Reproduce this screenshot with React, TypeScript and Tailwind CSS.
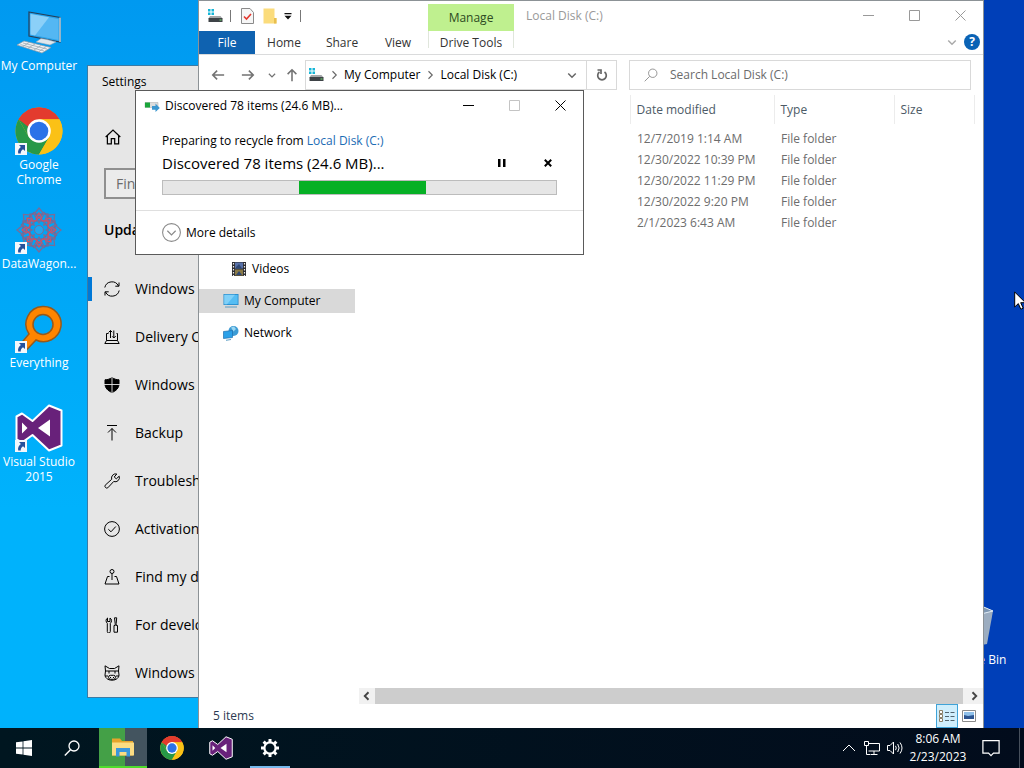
import type { ReactNode } from "react";

const font = "font-['Open_Sans','Noto_Sans',sans-serif]";

function ChromeLogo({ className }: { className: string }) {
  return (
    <svg viewBox="0 0 48 48" className={className} aria-hidden="true">
      <circle cx="24" cy="24" r="23.500" fill="#fbc116" />
      <path d="M3.600 12.300A23.500 23.500 0 0 0 24 47.500L34.200 29.900 24 24 13.800 29.900Z" fill="#279847" />
      <path d="M3.600 12.300A23.500 23.500 0 0 1 44.400 12.300H24L13 18Z" fill="#e33b2e" />
      <path d="M3.600 12.300 13.800 29.900 20 20Z" fill="#279847" />
      <path d="M3.600 12.300A23.500 23.500 0 0 1 44.400 12.300H24L13.500 20Z" fill="#e33b2e" />
      <path d="M44.400 12.300H24L34.200 29.900 24 47.500A23.500 23.500 0 0 0 44.400 12.300Z" fill="#fbc116" />
      <circle cx="24" cy="24" r="11.800" fill="#fff" />
      <circle cx="24" cy="24" r="9.300" fill="#2b72e8" />
    </svg>
  );
}

function VisualStudioLogo({ className }: { className: string }) {
  return (
    <svg viewBox="0 0 48 48" className={className} aria-hidden="true">
      <path
        d="M34 1.500 46.500 6.500V41.500L34 46.500 17.500 31 7 38.500 1.500 35.500V12.500L7 9.500 17.500 17Z"
        fill="#68217a"
        stroke="#fff"
        strokeWidth="2"
        strokeLinejoin="round"
      />
      <path d="M35 15.500V32.500L23 24Z M7 18.500V29.500L12.500 24Z" fill="#fff" />
    </svg>
  );
}

function ComputerIcon() {
  return (
    <svg viewBox="0 0 48 48" className="size-12" aria-hidden="true">
      <path d="M14 4 45 9.500V34L14 28Z" fill="#2aa3ea" stroke="#253f5a" strokeWidth="1.200" />
      <path d="M15.500 6 43.500 11V32L15.500 26.500Z" fill="#54b7f3" />
      <path d="M15.500 6 34 9.300 20 27.500 15.500 26.500Z" fill="#8bd0f8" />
      <path d="M45 9.500V34" stroke="#e8edf0" strokeWidth="1.200" />
      <path d="M26 30.500 32 31.500 41 34 35 37 21 34Z" fill="#dfe7ec" stroke="#8ea6b8" strokeWidth=".6" />
      <path d="M9 33 36 39.500 27 45 2 37Z" fill="#eef1f3" stroke="#8c9aa6" strokeWidth=".7" />
      <path d="M8 35 32 41M5.500 36.600 29 43M14 34.500 8 38.500M20 36 13 40.200M26 37.500 19 42M31 38.600 24 43.600" stroke="#9aa8b3" strokeWidth=".8" />
    </svg>
  );
}

function DataWagonIcon() {
  const angles = [0, 45, 90, 135];
  const petals = [0, 45, 90, 135, 180, 225, 270, 315];
  return (
    <svg viewBox="0 0 48 48" className="size-12" fill="none" aria-hidden="true">
      {angles.map((a) => (
        <rect key={a} x="8" y="15" width="32" height="18" stroke="#6f6a9a" strokeWidth="1.300" transform={`rotate(${a} 24 24)`} />
      ))}
      {petals.map((a) => (
        <g key={a} transform={`rotate(${a} 24 24)`}>
          <path d="M24 17 19 8 24 2 29 8Z" stroke="#7b6c96" strokeWidth="1.300" />
          <path d="M21 12 24 7 27 12M20 15 24 11 28 15" stroke="#cf5266" strokeWidth="1.200" />
        </g>
      ))}
      <circle cx="24" cy="24" r="4.500" fill="#22a6ee" stroke="#7b6c96" />
    </svg>
  );
}

function EverythingIcon() {
  return (
    <svg viewBox="0 0 48 48" className="size-12" aria-hidden="true">
      <path
        fillRule="evenodd"
        d="M27.500 1.500A17.600 17.600 0 1 1 21 35L12 44.500 6 38.500 14 29A17.600 17.600 0 0 1 27.500 1.500ZM28 9.500A10 10 0 1 0 28 29.500 10 10 0 0 0 28 9.500Z"
        fill="#ff8500"
        stroke="#95591c"
        strokeWidth="1.500"
      />
    </svg>
  );
}

function RecycleBinIcon() {
  return (
    <svg viewBox="0 0 48 48" className="size-12" aria-hidden="true">
      <path d="M7 7 28 3 42 9 36 42 20 45 11 40Z" fill="#9cadc0" />
      <path d="M7 7 28 3 42 9 22 14Z" fill="#7f98b3" stroke="#e3edf6" />
      <path d="M22 14 20 45" stroke="#d7e2ec" />
    </svg>
  );
}

function ShortcutArrow() {
  return (
    <svg viewBox="0 0 12 12" className="absolute bottom-0 left-0 size-3" aria-hidden="true">
      <path d="M0 0H12V12H0Z" fill="#f4f7fb" />
      <path d="M4 2H10V8L8 6.200C6.200 7.400 5.600 8.600 5.800 10.500H3.200C2.600 7.800 3.800 5.600 5.900 4Z" fill="#26519c" />
    </svg>
  );
}

function DesktopIcon({ label, icon, shortcut }: { label: string; icon: ReactNode; shortcut?: boolean }) {
  return (
    <a href="#open" className="flex h-[99px] w-[78px] flex-col items-center gap-0.5 text-center text-xs leading-[15px] text-white">
      <span className="relative">
        {icon}
        {shortcut && <ShortcutArrow />}
      </span>
      <span>{label}</span>
    </a>
  );
}

function LineIcon({ children, className = "size-4" }: { children: ReactNode; className?: string }) {
  return (
    <svg viewBox="0 0 16 16" className={`${className} shrink-0`} fill="none" stroke="currentColor" aria-hidden="true">
      {children}
    </svg>
  );
}

const settingsItems: { label: string; icon: ReactNode }[] = [
  {
    label: "Windows Update",
    icon: <path d="M.8 6.500A7.300 7.300 0 0 1 14.500 5M15.200 9.500A7.300 7.300 0 0 1 1.500 11M15 1.500V5.200H11.300M1 14.500V10.800H4.700" />,
  },
  {
    label: "Delivery Optimization",
    icon: <path d="M4.500 4.500H2.500V11.500H13.500V4.500H12.500M2.500 11.500 .8 14.500H15.200L13.500 11.500M6.500 9V1.500M4.500 3.500 6.500 1.500 8.200 3.200M9.800 1.500V9M8.200 7.300 9.800 9 11.800 7" />,
  },
  {
    label: "Windows Security",
    icon: (
      <>
        <path d="M8 .5C10 2 12.500 2.800 15 2.800V7C15 11 12 14 8 15.500 4 14 1 11 1 7V2.800C3.500 2.800 6 2 8 .5Z" fill="currentColor" />
        <path d="M8 0V16M0 7.500H16" stroke="#e6e6e6" strokeWidth=".9" />
      </>
    ),
  },
  { label: "Backup", icon: <path d="M3 .5H13M8 15.500V3.500M4 7.500 8 3.500 12 7.500" /> },
  {
    label: "Troubleshoot",
    icon: <path d="M15.200 3.200 12.300 5.800 10.200 4 12.800 1A4.200 4.200 0 0 0 7.700 6.300L1.200 12.200A1.900 1.900 0 0 0 3.800 14.800L9.700 8.500A4.200 4.200 0 0 0 15.200 3.200Z" />,
  },
  {
    label: "Activation",
    icon: (
      <>
        <circle cx="8" cy="8" r="7.400" />
        <path d="M4.300 8.200 7 10.800 11.800 5.500" />
      </>
    ),
  },
  {
    label: "Find my device",
    icon: (
      <>
        <circle cx="8" cy="2.500" r="2" />
        <path d="M8 4.500V11M5.500 7.500H3.500L1 15H15L12.500 7.500H10.500" />
      </>
    ),
  },
  {
    label: "For developers",
    icon: <path d="M3.500 1V4.500H6V1C8 2 8 5 6.300 6.300V14.500A1.500 1.500 0 0 1 3.300 14.500V6.300C1.600 5 1.600 2 3.500 1ZM10.500 .8H12.700L12.200 6.500V8.500H13.500V15.200H10V8.500H11.200V6.500Z" />,
  },
  {
    label: "Windows Insider Program",
    icon: (
      <>
        <path d="M1.500 6 1 .8 5.500 3.500H10.500L15 .8 14.500 6 15 10C15 12.500 12.500 15.200 8 15.200S1 12.500 1 10ZM1.500 6H14.500M5 6V8.500M11 6V8.500M1 11H4" />
        <rect x="4.500" y="10.300" width="7" height="4" rx="2" />
        <path d="M6.500 12V13M9.500 12V13M12 11H15" />
      </>
    ),
  },
];

function SettingsWindow() {
  return (
    <section
      aria-label="Settings"
      className="absolute top-[65px] left-[87px] flex h-[633px] w-[600px] flex-col border border-[#3b7ba5] bg-[#e6e6e6] text-black"
    >
      <h2 className="px-3.5 pt-2 text-xs leading-4">Settings</h2>
      <div className="mt-7 flex h-10 items-center px-4">
        <LineIcon className="size-[18px]">
          <path d="M1.500 8 8 1.800 14.500 8M3 6.800V14.200H6.500V9.500H9.500V14.200H13V6.800" strokeWidth="1.100" />
        </LineIcon>
      </div>
      <input
        aria-label="Find a setting"
        placeholder="Find a setting"
        className="mx-4 mt-3 h-8 w-[240px] border-2 border-[#8f8f8f] bg-[#ebebeb] px-2.5 text-sm placeholder:text-[#6b6b6b]"
      />
      <h3 className="mt-[21px] px-4 text-sm leading-5 font-semibold">Update &amp; Security</h3>
      <nav className="mt-[25px] flex flex-col">
        {settingsItems.map((item, i) => (
          <a key={item.label} href="#settings" className="flex h-12 items-center">
            <span className={i === 0 ? "h-6 w-1 bg-[#0078d7]" : "h-6 w-1"} />
            <span className="ml-3 flex w-[31px]">
              <LineIcon>{item.icon}</LineIcon>
            </span>
            <span className="text-sm whitespace-nowrap">{item.label}</span>
          </a>
        ))}
      </nav>
    </section>
  );
}

function DriveIcon() {
  return (
    <svg viewBox="0 0 16 16" className="size-4 shrink-0" aria-hidden="true">
      <path d="M1 1H3.500V3.500H1ZM4.500 1H7V3.500H4.500ZM1 4.500H3.500V7H1ZM4.500 4.500H7V7H4.500Z" fill="#16b6d8" />
      <path d="M3 8H13.500L15.500 10.500H1.500Z" fill="#a5a8aa" />
      <path d="M1.500 10H15.500V14H1.500Z" fill="#3e4347" />
      <path d="M12.500 12H14.500" stroke="#6fe36f" />
    </svg>
  );
}

function Chevron({ dir, className }: { dir: "down" | "right" | "left" | "up"; className: string }) {
  const d = { down: "M3 6 8 11 13 6", right: "M6 3 11 8 6 13", left: "M10 3 5 8 10 13", up: "M2 11 8 5 14 11" }[dir];
  return (
    <svg viewBox="0 0 16 16" className={className} fill="none" stroke="currentColor" aria-hidden="true">
      <path d={d} />
    </svg>
  );
}

function WindowControls({ maxClass = "" }: { maxClass?: string }) {
  const shapes = [
    { label: "Minimize", d: "M0 5.500H11", cls: "" },
    { label: "Maximize", d: "M.5 .5H10.500V10.500H.5Z", cls: maxClass },
    { label: "Close", d: "M.5 .5 10.500 10.500M10.500 .5 .5 10.500", cls: "" },
  ];
  return (
    <div className="flex">
      {shapes.map((s) => (
        <button key={s.label} type="button" aria-label={s.label} className={`flex h-7 w-[46px] items-center justify-center ${s.cls}`}>
          <svg viewBox="0 0 11 11" className="size-[11px]" fill="none" stroke="currentColor" aria-hidden="true">
            <path d={s.d} />
          </svg>
        </button>
      ))}
    </div>
  );
}

const files = [
  ["12/7/2019 1:14 AM", "File folder"],
  ["12/30/2022 10:39 PM", "File folder"],
  ["12/30/2022 11:29 PM", "File folder"],
  ["12/30/2022 9:20 PM", "File folder"],
  ["2/1/2023 6:43 AM", "File folder"],
];

function ExplorerWindow() {
  return (
    <section
      aria-label="Local Disk (C:)"
      className="absolute top-0 right-10 bottom-0 left-[198px] flex flex-col border border-b-0 border-[#8c9296] bg-white text-xs text-[#333]"
    >
      <header className="flex h-[54px] shrink-0 border-b border-[#dadbdc]">
        <div className="flex w-[229px] flex-col">
          <div className="flex h-[30px] items-center pl-2">
            <DriveIcon />
            <span className="mx-[7px] h-3 w-px bg-[#777]" />
            <svg viewBox="0 0 16 16" className="ml-0.5 size-4" fill="none" aria-hidden="true">
              <path d="M1.500 .5H10L13.500 4.500V15.500H1.500Z" fill="#f6f6f6" stroke="#8a8a8a" />
              <path d="M4 8.500 6.500 11 11 6" stroke="#e2372d" strokeWidth="1.600" />
            </svg>
            <svg viewBox="0 0 16 16" className="ml-1.5 size-4" aria-hidden="true">
              <path d="M1.500 .5H12.500V10H14.500V15.500H1.500Z" fill="#fbdc7c" />
              <path d="M12 10H14.500V15.500H12Z" fill="#e8bf4f" />
            </svg>
            <svg viewBox="0 0 8 8" className="ml-1.5 size-2" aria-hidden="true">
              <path d="M.5 1H7.500V2.200H.5ZM.5 3.800H7.500L4 7.500Z" fill="#111" />
            </svg>
            <span className="ml-2 h-3 w-px bg-[#777]" />
          </div>
          <div className="flex h-[23px] items-stretch">
            <button type="button" className="w-14 bg-[#0f62b0] text-white">File</button>
            <button type="button" className="w-[58px]">Home</button>
            <button type="button" className="w-[58px]">Share</button>
            <button type="button" className="w-[54px]">View</button>
          </div>
        </div>
        <div className="mt-[3px] flex w-[86px] flex-col">
          <div className="flex h-[27px] items-center justify-center bg-[#bff08f] text-[#2d4a22]">Manage</div>
          <button type="button" className="h-[17px] border-x border-[#e0e6dc] pt-1">Drive Tools</button>
        </div>
        <div className="flex flex-1 flex-col">
          <div className="flex h-[30px] items-start justify-between pl-3 text-[#999]">
            <span className="leading-[30px]">Local Disk (C:)</span>
            <WindowControls />
          </div>
          <div className="flex items-center justify-end gap-1.5 pt-[3px] pr-[3px]">
            <Chevron dir="down" className="size-3 stroke-2 text-[#aaa]" />
            <button type="button" aria-label="Help" className="flex size-4 items-center justify-center rounded-full bg-[#0a63b5] text-xs leading-4 font-bold text-white">
              ?
            </button>
          </div>
        </div>
      </header>

      <div className="flex h-10 shrink-0 items-center px-3">
        <div className="flex w-[94px] items-center text-[#737373]">
          <LineIcon className="size-3.5">
            <path d="M15 8H2M7 3 2 8 7 13" strokeWidth="1.800" />
          </LineIcon>
          <LineIcon className="ml-4 size-3.5">
            <path d="M1 8H14M9 3 14 8 9 13" strokeWidth="1.800" />
          </LineIcon>
          <Chevron dir="down" className="ml-3 size-2.5 stroke-2" />
          <LineIcon className="ml-2 size-3.5">
            <path d="M8 15V2M3 7 8 2 13 7" strokeWidth="1.800" />
          </LineIcon>
        </div>
        <div className="flex h-[30px] w-[312px] items-stretch border border-[#d9d9d9]">
          <div className="flex flex-1 items-center pl-0.5 text-black">
            <DriveIcon />
            <Chevron dir="right" className="mx-1 size-3 stroke-[1.5] text-[#666]" />
            <span>My Computer</span>
            <Chevron dir="right" className="mx-1 size-3 stroke-[1.5] text-[#666]" />
            <span>Local Disk (C:)</span>
            <Chevron dir="down" className="mr-2 ml-auto size-3 stroke-2 text-[#666]" />
          </div>
          <button type="button" aria-label="Refresh" className="flex w-[30px] items-center justify-center border-l border-[#d9d9d9] text-[#666]">
            <svg viewBox="0 0 14 14" className="size-3.5" fill="none" stroke="currentColor" aria-hidden="true">
              <path d="M9.500 4A4.300 4.300 0 1 1 4.500 4M2.500 2H6V6" strokeWidth="1.700" />
            </svg>
          </button>
        </div>
        <label className="ml-3 flex h-[30px] flex-1 items-center gap-3 border border-[#d9d9d9] pl-3.5 text-[#888]">
          <LineIcon className="size-3.5">
            <circle cx="10" cy="6" r="4.800" />
            <path d="M6.500 9.500 .8 15.200" />
          </LineIcon>
          <input aria-label="Search Local Disk (C:)" placeholder="Search Local Disk (C:)" className="min-w-0 flex-1 text-xs placeholder:text-[#6b6b6b]" />
        </label>
      </div>

      <div className="flex min-h-0 flex-1">
        <nav className="flex w-[156px] shrink-0 flex-col gap-2 pt-[162px] text-black">
          <a href="#videos" className="flex h-6 items-center gap-[5px] pl-8">
            <svg viewBox="0 0 16 16" className="size-4" aria-hidden="true">
              <path d="M1 1H15V15H1Z" fill="#2c2c30" />
              <path d="M4 1.500H12V7.500H4Z" fill="#5871a8" />
              <path d="M4 8.500H12V14.500H4Z" fill="#8a7a46" />
              <path d="M5 6 8 3 11 7.500H5ZM5 14 8 10 11 14Z" fill="#2f4875" />
              <path d="M2.500 2V15M13.500 2V15" stroke="#eee" strokeWidth="1.200" strokeDasharray="1.500 1.500" />
            </svg>
            <span>Videos</span>
          </a>
          <a href="#computer" className="flex h-6 items-center gap-[5px] bg-[#d9d9d9] pl-6">
            <svg viewBox="0 0 16 16" className="size-4" aria-hidden="true">
              <path d="M.5 1H15.500V12H.5Z" fill="#2588c8" />
              <path d="M1.300 1.800H14.700V11.200H1.300Z" fill="#55bdf3" />
              <path d="M1.300 1.800H12L4 11.200H1.300Z" fill="#80d0f8" />
              <path d="M2 14H14" stroke="#5a9cc4" />
            </svg>
            <span>My Computer</span>
          </a>
          <a href="#network" className="flex h-6 items-center gap-[5px] pl-6">
            <svg viewBox="0 0 16 16" className="size-4" aria-hidden="true">
              <circle cx="10.500" cy="6" r="5" fill="#3d9bd4" />
              <path d="M8 2.500 11 1.500 13 4 10.500 6.500Z" fill="#9bd7f2" />
              <path d="M.5 6.500 9.500 5.500V12.500L.5 13.500Z" fill="#2aa0e8" stroke="#1f6fae" strokeWidth=".7" />
              <path d="M3 15.300 8 14.500" stroke="#5a9cc4" />
            </svg>
            <span>Network</span>
          </a>
        </nav>

        <div className="flex min-w-0 flex-1 flex-col pl-1">
          <div className="flex-1 overflow-hidden">
            <table className="w-[615px] table-fixed border-collapse text-left text-[#6d6d6d]">
              <colgroup>
                <col className="w-[271px]" />
                <col className="w-36" />
                <col className="w-[120px]" />
                <col className="w-20" />
              </colgroup>
              <thead>
                <tr className="h-[29px] text-[#4c5a66]">
                  <td className="border-r border-[#ececec]" />
                  <th className="border-r border-[#ececec] pl-1.5 font-normal">Date modified</th>
                  <th className="border-r border-[#ececec] pl-1.5 font-normal">Type</th>
                  <th className="border-r border-[#ececec] pl-1.5 font-normal">Size</th>
                </tr>
              </thead>
              <tbody>
                <tr className="h-1">
                  <td colSpan={4} />
                </tr>
                {files.map(([date, type]) => (
                  <tr key={date} className="h-[21px]">
                    <td />
                    <td className="pl-[7px] whitespace-nowrap">{date}</td>
                    <td className="pl-[7px]">{type}</td>
                    <td />
                  </tr>
                ))}
              </tbody>
            </table>
          </div>
          <div className="flex h-4 shrink-0 items-center bg-[#f1f1f1] text-[#444]">
            <button type="button" aria-label="Scroll left" className="flex w-4 justify-center">
              <Chevron dir="left" className="size-3 stroke-[2.5]" />
            </button>
            <div className="h-4 flex-1 bg-[#cdcdcd]" />
            <button type="button" aria-label="Scroll right" className="flex w-5 justify-center pl-0.5">
              <Chevron dir="right" className="size-3 stroke-[2.5]" />
            </button>
          </div>
        </div>
      </div>

      <footer className="flex h-6 shrink-0 items-center pr-1.5 pl-3.5 text-[#2c3a52]">
        <span className="flex-1">5 items</span>
        <button type="button" aria-label="Details view" className="flex h-6 w-[22px] items-center justify-center border border-[#3fa3d8] bg-[#cfeefc]">
          <svg viewBox="0 0 16 14" className="h-3.5 w-4" fill="none" aria-hidden="true">
            <path d="M.5 1.500H3.500V4.500H.5ZM.5 5.500H3.500V8.500H.5ZM.5 9.500H3.500V12.500H.5Z" fill="#fff" stroke="#8a7f66" />
            <path d="M6 3.500H10M11.500 3.500H15.500M6 7.500H10M11.500 7.500H15.500M6 11.500H10M11.500 11.500H15.500" stroke="#52646e" />
          </svg>
        </button>
        <button type="button" aria-label="Thumbnail view" className="ml-[3px] flex w-4 justify-center">
          <svg viewBox="0 0 14 12" className="h-3 w-3.5" aria-hidden="true">
            <path d="M.5 .5H13.500V11.500H.5Z" fill="#fff" stroke="#8b8b8b" />
            <path d="M2 2H12V9H2Z" fill="#8fc0ea" />
            <path d="M2 5 6 6 12 5V9H2Z" fill="#2c5490" />
          </svg>
        </button>
      </footer>
    </section>
  );
}

function ProgressDialog() {
  return (
    <section
      aria-label="Discovered 78 items"
      className="absolute top-[90px] left-[135px] flex w-[449px] flex-col border border-[#5a5a5a] bg-white text-xs text-black"
    >
      <header className="flex h-[29px] items-center pl-2">
        <svg viewBox="0 0 16 14" className="mr-[5px] h-3.5 w-4" aria-hidden="true">
          <path d="M1 3.500H14V8.500H1Z" fill="#dcdcdc" stroke="#aaa" strokeWidth=".5" />
          <path d="M1 3.500H6V8.500H1Z" fill="#1aa53a" />
          <path d="M8 7H11.500V4.500L15.800 9 11.500 13V10.700H8Z" fill="#3c97cf" />
        </svg>
        <span className="flex-1">Discovered 78 items (24.6 MB)...</span>
        <WindowControls maxClass="text-[#c4c4c4]" />
      </header>
      <div className="px-[26px] pt-[13px] pb-[15px]">
        <p className="leading-4">
          Preparing to recycle from <a href="#disk" className="text-[#1c6cb4]">Local Disk (C:)</a>
        </p>
        <div className="flex h-[27px] items-center">
          <h2 className="flex-1 text-[15px] leading-6">Discovered 78 items (24.6 MB)...</h2>
          <button type="button" aria-label="Pause" className="flex w-4 justify-center">
            <svg viewBox="0 0 8 8" className="size-2" aria-hidden="true">
              <path d="M0 0H2.500V8H0ZM5 0H7.500V8H5Z" />
            </svg>
          </button>
          <button type="button" aria-label="Cancel" className="mr-px ml-[30px] flex w-4 justify-center">
            <svg viewBox="0 0 8 8" className="size-2" aria-hidden="true">
              <path d="M.8 .8 7.200 7.200M7.200 .8 .8 7.200" stroke="#000" strokeWidth="2" />
            </svg>
          </button>
        </div>
        <div role="progressbar" aria-label="Discovering items" className="mt-1 flex h-[15px] border border-[#bcbcbc] bg-[#e6e6e6]">
          <span className="ml-[136px] w-[127px] bg-[#06b025]" />
        </div>
      </div>
      <footer className="flex h-11 items-center border-t border-[#dfdfdf] pl-[26px]">
        <button type="button" className="flex items-center gap-[5px]">
          <LineIcon className="size-[19px] text-[#8a8a8a]">
            <circle cx="8" cy="8" r="7.500" strokeWidth=".9" />
            <path d="M4.500 6.500 8 10 11.500 6.500" />
          </LineIcon>
          More details
        </button>
      </footer>
    </section>
  );
}

function TaskButton({ label, children, className = "" }: { label: string; children: ReactNode; className?: string }) {
  return (
    <button type="button" aria-label={label} className={`flex h-full w-12 items-center justify-center ${className}`}>
      {children}
    </button>
  );
}

function Taskbar() {
  return (
    <footer className="flex h-10 shrink-0 items-center justify-between bg-linear-to-r from-[#001620] to-[#020c1c] text-white">
      <div className="flex h-full items-center gap-px">
        <TaskButton label="Start">
          <svg viewBox="0 0 16 16" className="size-4" fill="#fff" aria-hidden="true">
            <path d="M0 2.300 6.600 1.400V7.600H0ZM7.400 1.300 16 0V7.600H7.400ZM0 8.400H6.600V14.600L0 13.700ZM7.400 8.400H16V16L7.400 14.700Z" />
          </svg>
        </TaskButton>
        <TaskButton label="Search" className="pr-0.5">
          <LineIcon className="size-4">
            <circle cx="10" cy="6" r="5" strokeWidth="1.300" />
            <path d="M6.500 9.700 .8 15.500" strokeWidth="1.400" />
          </LineIcon>
        </TaskButton>
        <TaskButton label="File Explorer" className="ml-px border-b-2 border-[#4fdc2c] bg-linear-to-r from-[#44a047] from-55% to-[#43545f] to-55%">
          <svg viewBox="0 0 24 20" className="h-5 w-6" aria-hidden="true">
            <path d="M1 1.500H9L11 4H22V18.500H1Z" fill="#e6a52c" />
            <path d="M1 5.500H23V18.500H1Z" fill="#fbdc83" />
            <path d="M5 11H19V19.500H15.500V15H8.500V19.500H5Z" fill="#3b96dc" />
          </svg>
        </TaskButton>
        <TaskButton label="Google Chrome">
          <ChromeLogo className="size-6" />
        </TaskButton>
        <TaskButton label="Visual Studio">
          <VisualStudioLogo className="size-6" />
        </TaskButton>
        <TaskButton label="Settings" className="px-1">
          <span className="flex h-full w-10 items-center justify-center border-y-2 border-t-transparent border-b-[#76b9ed]">
            <svg viewBox="-10 -10 20 20" className="size-5" fill="none" stroke="#fff" aria-hidden="true">
              <circle r="5.600" strokeWidth="2.200" />
              {[0, 45, 90, 135, 180, 225, 270, 315].map((a) => (
                <path key={a} d="M0 -6V-9" strokeWidth="3" transform={`rotate(${a})`} />
              ))}
            </svg>
          </span>
        </TaskButton>
      </div>
      <div className="flex h-full items-center">
        <Chevron dir="up" className="size-4" />
        <LineIcon className="ml-[7px] size-4">
          <path d="M4.500 3.500H15.500V11H4.500M10 11V14.500M6.500 14.500H13.500M.5 1.500H4.500V5.500H.5ZM2.500 5.500V14.500H6" />
        </LineIcon>
        <LineIcon className="ml-[7px] size-4">
          <path d="M.5 5.500H3L6.500 2V14L3 10.500H.5ZM8.500 5.800Q10 8 8.500 10.200M10.700 4Q13.500 8 10.700 12M13 2.500Q17 8 13 13.500" />
        </LineIcon>
        <time className="w-[70px] text-center text-xs leading-[18px]">
          8:06 AM
          <br />
          2/23/2023
        </time>
        <button type="button" aria-label="Notifications" className="ml-[9px] flex">
          <LineIcon className="size-[18px]">
            <path d="M.8 1.500H15.200V12.500H10.200L8 14.800 5.800 12.500H.8Z" strokeWidth="1.100" />
          </LineIcon>
        </button>
        <span className="mr-1 ml-[19px] h-full w-px bg-[#47505c]" />
      </div>
    </footer>
  );
}

export default function App() {
  return (
    <div className={`flex h-screen flex-col overflow-hidden ${font}`}>
      <main className="relative min-h-0 flex-1 overflow-hidden bg-linear-to-r from-[#00a6f8] from-20% to-[#003fb8] to-95%">
        <div className="flex h-full w-[199px] flex-col bg-linear-to-b from-[#0099f0] to-[#00b2fc] to-70% pt-2">
          <DesktopIcon label="My Computer" icon={<ComputerIcon />} />
          <DesktopIcon label="Google Chrome" shortcut icon={<ChromeLogo className="size-12" />} />
          <DesktopIcon label="DataWagon..." shortcut icon={<DataWagonIcon />} />
          <DesktopIcon label="Everything" shortcut icon={<EverythingIcon />} />
          <DesktopIcon label="Visual Studio 2015" shortcut icon={<VisualStudioLogo className="size-12" />} />
        </div>
        <div className="absolute right-2.5 bottom-[27px]">
          <DesktopIcon label="Recycle Bin" icon={<RecycleBinIcon />} />
        </div>
        <SettingsWindow />
        <ExplorerWindow />
        <ProgressDialog />
        <svg viewBox="0 0 12 19" className="absolute top-[291px] -right-0.5 h-[19px] w-3" aria-hidden="true">
          <path d="M.7 1V16L4.300 12.600 6.800 18.200 9.200 17.200 6.700 11.700H11.500Z" fill="#fff" stroke="#000" />
        </svg>
      </main>
      <Taskbar />
    </div>
  );
}
